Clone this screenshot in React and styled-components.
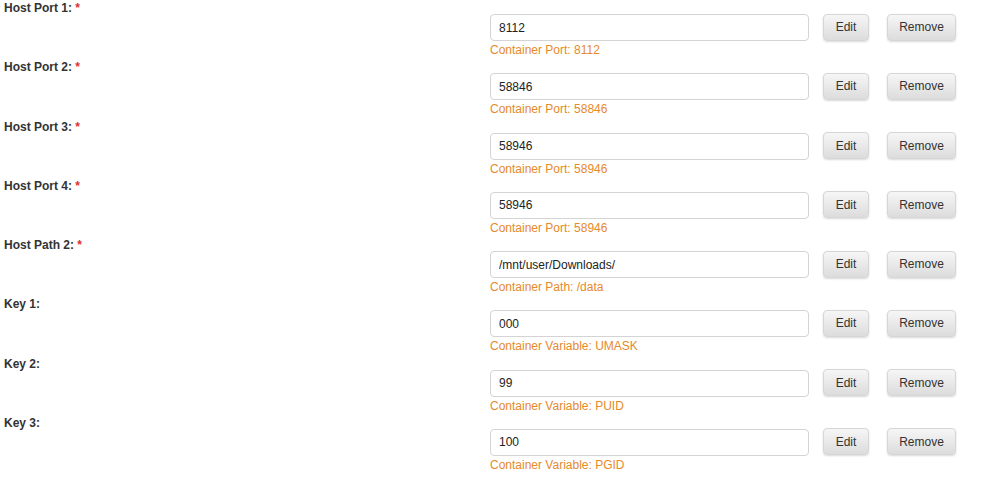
import React from 'react';
import styled, { createGlobalStyle } from 'styled-components';

const rows = [
	{ label: 'Host Port 1:', required: true, value: '8112', hint: 'Container Port: 8112' },
	{ label: 'Host Port 2:', required: true, value: '58846', hint: 'Container Port: 58846' },
	{ label: 'Host Port 3:', required: true, value: '58946', hint: 'Container Port: 58946' },
	{ label: 'Host Port 4:', required: true, value: '58946', hint: 'Container Port: 58946' },
	{ label: 'Host Path 2:', required: true, value: '/mnt/user/Downloads/', hint: 'Container Path: /data' },
	{ label: 'Key 1:', value: '000', hint: 'Container Variable: UMASK' },
	{ label: 'Key 2:', value: '99', hint: 'Container Variable: PUID' },
	{ label: 'Key 3:', value: '100', hint: 'Container Variable: PGID' },
];

const App = () => {
	return (
		<>
			<GlobalStyle />
			<Form>
				{rows.map((row, i) => (
					<Row key={i}>
						<Label>
							{row.label}
							{row.required && <Req> *</Req>}
						</Label>
						<Control>
							<Line>
								<Input defaultValue={row.value} />
								<Button $w={46}>Edit</Button>
								<Button $w={69}>Remove</Button>
							</Line>
							<Hint>{row.hint}</Hint>
						</Control>
					</Row>
				))}
			</Form>
		</>
	);
};

const GlobalStyle = createGlobalStyle`
	body {
		margin: 0;
		background: #fff;
		font-family: "Liberation Sans", Arial, sans-serif;
	}
`;

const Form = styled.div`
	display: flex;
	flex-direction: column;
`;

const Row = styled.div`
	display: grid;
	grid-template-columns: 490px 1fr;
	height: 59.25px;
`;

const Label = styled.div`
	padding-left: 4px;
	font-size: 12px;
	line-height: 16px;
	font-weight: bold;
	color: #333;
`;

const Req = styled.span`
	color: #e03030;
`;

const Control = styled.div`
	padding-top: 13px;
`;

const Line = styled.div`
	display: flex;
	align-items: center;
`;

const Input = styled.input`
	box-sizing: border-box;
	width: 319px;
	height: 27px;
	margin: 1px 14px 0 0;
	padding: 0 8px;
	border: 1px solid #d4d4d4;
	border-radius: 4px;
	background: #fff;
	font-family: "Liberation Sans", Arial, sans-serif;
	font-size: 12px;
	color: #222;
	outline: none;
`;

const Button = styled.button`
	box-sizing: border-box;
	width: ${(p) => p.$w}px;
	height: 27px;
	margin-right: 18px;
	padding: 0;
	border: 1px solid #d6d6d6;
	border-radius: 4px;
	background: linear-gradient(#f6f6f6, #dcdcdc);
	box-shadow: 0 1px 2px rgba(0, 0, 0, 0.15);
	font-family: "Liberation Sans", Arial, sans-serif;
	font-size: 12px;
	color: #333;
	cursor: pointer;
`;

const Hint = styled.div`
	margin-top: 1px;
	font-size: 12px;
	line-height: 16px;
	color: #e68a2b;
`;

export default App;
